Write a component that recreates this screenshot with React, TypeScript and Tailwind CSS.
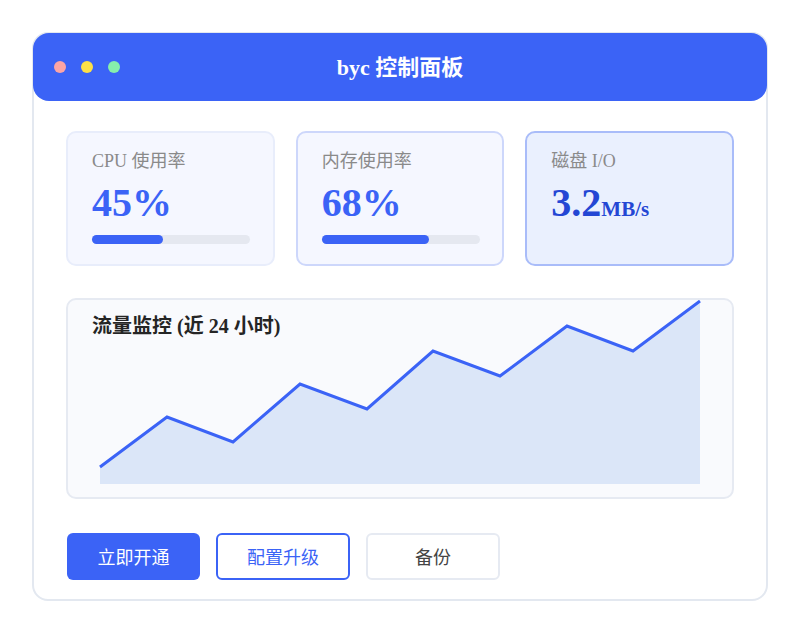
import React from "react"

const serif = "font-['Liberation_Serif','Times_New_Roman','Noto_Sans_CJK_SC',serif]"
const sans = "font-['Noto_Sans_CJK_SC','Liberation_Sans',sans-serif]"

interface StatCardProps {
    label: string
    value: string
    unit?: string
    progress?: number
    className: string
    valueClass: string
}

function StatCard({ label, value, unit, progress, className, valueClass }: StatCardProps) {
    return (
        <div className={`h-[135px] rounded-[10px] border-2 px-[24px] pt-[15px] ${className}`}>
            <div className={`text-[18px] leading-[26px] text-[#8a8a8a] ${serif}`}>{label}</div>
            <div className={`mt-[7px] h-[44px] font-bold leading-[44px] ${valueClass} ${serif}`}>
                <span className="text-[40px]">{value}</span>
                {unit && <span className="text-[21px]">{unit}</span>}
            </div>
            {progress !== undefined && (
                <div className="mt-[10px] h-[9px] w-[158px] rounded-full bg-[#e5e8f0]">
                    <div
                        className="h-full rounded-full bg-[#3b63f6]"
                        style={{ width: `${progress}%` }}
                    />
                </div>
            )}
        </div>
    )
}

const points: [number, number][] = [
    [34, 167], [101, 117], [167, 142], [234, 84], [301, 109],
    [367, 51], [434, 76], [501, 26], [567, 51], [634, 1],
]

function TrafficChart() {
    const line = points.map(([x, y]) => `${x},${y}`).join(" ")
    const area = `M34,184 L${points.map(([x, y]) => `${x},${y}`).join(" L")} L634,184 Z`
    return (
        <div className="relative h-[201px] rounded-[10px] border-2 border-[#e6eaf2] bg-[#f9fafd]">
            <svg className="absolute inset-0" width="664" height="197" viewBox="2 0 664 197">
                <path d={area} fill="#dbe6f8" />
                <polyline
                    points={line}
                    fill="none"
                    stroke="#3b63f6"
                    strokeWidth="3"
                    strokeLinejoin="miter"
                />
            </svg>
            <div className={`relative px-[24px] pt-[12px] text-[20px] font-bold leading-[28px] text-[#252525] ${serif}`}>
                流量监控 (近 24 小时)
            </div>
        </div>
    )
}

export default function App() {
    return (
        <div className="min-h-[633px] bg-white pl-[32px] pt-[32px]">
            <div className="h-[569px] w-[736px] rounded-[16px] border-2 border-[#e3e8f0] bg-white">
                {/* Title bar */}
                <div className="relative -m-[1px] flex h-[68px] items-center rounded-[16px] bg-[#3b63f6] px-[21px]">
                    <div className="flex gap-[15px]">
                        <span className="h-[12px] w-[12px] rounded-full bg-[#fca5a5]" />
                        <span className="h-[12px] w-[12px] rounded-full bg-[#fde047]" />
                        <span className="h-[12px] w-[12px] rounded-full bg-[#86efac]" />
                    </div>
                    <div className={`absolute inset-x-0 text-center text-[22px] font-bold text-white ${serif}`}>
                        byc 控制面板
                    </div>
                </div>

                {/* Body */}
                <div className="px-[32px] pt-[31px]">
                    <div className="grid grid-cols-3 gap-[21px]">
                        <StatCard
                            label="CPU 使用率"
                            value="45%"
                            progress={45}
                            className="border-[#e8edfb] bg-[#f5f7ff]"
                            valueClass="text-[#3b63f6]"
                        />
                        <StatCard
                            label="内存使用率"
                            value="68%"
                            progress={68}
                            className="border-[#cdd7fb] bg-[#f5f7ff]"
                            valueClass="text-[#3b63f6]"
                        />
                        <StatCard
                            label="磁盘 I/O"
                            value="3.2"
                            unit="MB/s"
                            className="border-[#a9bcf9] bg-[#eaf0fe]"
                            valueClass="text-[#2447d4]"
                        />
                    </div>

                    <div className="mt-[32px]">
                        <TrafficChart />
                    </div>

                    <div className={`mt-[34px] flex gap-[16px] pl-[1px] text-[18px] ${sans}`}>
                        <button className="h-[47px] w-[133px] rounded-[6px] bg-[#3b63f6] text-white">
                            立即开通
                        </button>
                        <button className="h-[47px] w-[134px] rounded-[6px] border-2 border-[#3b63f6] bg-white text-[#3b63f6]">
                            配置升级
                        </button>
                        <button className="h-[47px] w-[134px] rounded-[6px] border-2 border-[#e6eaf2] bg-white text-[#444]">
                            备份
                        </button>
                    </div>
                </div>
            </div>
        </div>
    )
}
